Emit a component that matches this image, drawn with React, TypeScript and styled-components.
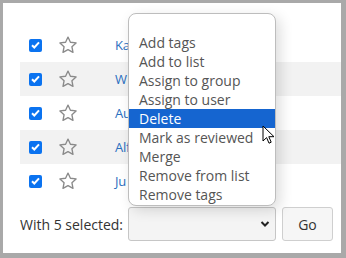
import React, { FC } from 'react';
import styled, { createGlobalStyle } from 'styled-components';

const GlobalStyle = createGlobalStyle`
  html, body {
    margin: 0;
    padding: 0;
    background: #a9a9a9;
  }
  body {
    width: 346px;
    height: 258px;
    overflow: hidden;
    font-family: 'Open Sans', 'Noto Sans', sans-serif;
  }
`;

const Panel = styled.div`
  position: relative;
  margin: 3px 5px 5px 3px;
  width: 338px;
  height: 250px;
  background: #fff;
  box-sizing: border-box;
  padding: 25px 0 0 17px;
`;

const Row = styled.div<{ $striped?: boolean }>`
  display: flex;
  align-items: center;
  height: 34px;
  background: ${(p) => (p.$striped ? '#f2f2f2' : 'transparent')};
`;

const Check = styled.span`
  width: 13px;
  height: 13px;
  margin-left: 9px;
  border-radius: 2px;
  background: #0b73f0;
  display: flex;
  align-items: center;
  justify-content: center;
`;

const StarCell = styled.span`
  margin-left: 16px;
  width: 20px;
  height: 20px;
  display: flex;
`;

const Name = styled.a`
  margin-left: 37px;
  color: #2a6fc0;
  font-size: 13px;
  letter-spacing: -0.3px;
  text-decoration: none;
`;

const Footer = styled.div`
  display: flex;
  align-items: center;
  margin-top: 9px;
  height: 34px;
`;

const Label = styled.span`
  font-size: 14px;
  color: #333;
  width: 108px;
`;

const Select = styled.div`
  width: 148px;
  height: 34px;
  box-sizing: border-box;
  border: 1px solid #c6c6c6;
  border-radius: 3px;
  background: #f4f4f4;
  display: flex;
  align-items: center;
  justify-content: flex-end;
  padding-right: 5px;
`;

const GoButton = styled.button`
  margin-left: 6px;
  width: 51px;
  height: 34px;
  border: 1px solid #cfcfcf;
  border-radius: 3px;
  background: #f6f6f6;
  font-family: inherit;
  font-size: 14px;
  color: #333;
`;

const Menu = styled.ul`
  position: absolute;
  left: 125px;
  top: 10px;
  width: 148px;
  margin: 0;
  padding: 0 0 1px;
  list-style: none;
  background: #fff;
  border: 1px solid #bdbdbd;
  border-radius: 8px;
  box-sizing: border-box;
  box-shadow: 4px 4px 14px rgba(0, 0, 0, 0.14);
`;

const Option = styled.li<{ $active?: boolean }>`
  height: 19px;
  line-height: 19px;
  padding-left: 10px;
  font-size: 14px;
  color: ${(p) => (p.$active ? '#fff' : '#555')};
  background: ${(p) => (p.$active ? '#1565d0' : 'transparent')};
`;

const Cursor = styled.svg`
  position: absolute;
  left: 259px;
  top: 122px;
`;

const Star: FC = () => (
  <svg width="20" height="20" viewBox="0 0 24 24">
    <path
      d="M12 2.5l2.9 6.2 6.8.8-5 4.6 1.3 6.7L12 17.5l-6 3.3 1.3-6.7-5-4.6 6.8-.8z"
      fill="none"
      stroke="#8a8a8a"
      strokeWidth="1.6"
      strokeLinejoin="round"
    />
  </svg>
);

const rows = ['Ka', 'W', 'Au', 'Alf', 'Ju'];
const options = [
  '',
  'Add tags',
  'Add to list',
  'Assign to group',
  'Assign to user',
  'Delete',
  'Mark as reviewed',
  'Merge',
  'Remove from list',
  'Remove tags',
];

const App: FC = () => (
  <>
    <GlobalStyle />
    <Panel>
      {rows.map((name, i) => (
        <Row key={i} $striped={i % 2 === 1}>
          <Check>
            <svg width="9" height="8" viewBox="0 0 9 8">
              <path d="M1 4.2l2.3 2.3L8 1.3" fill="none" stroke="#fff" strokeWidth="2" />
            </svg>
          </Check>
          <StarCell>
            <Star />
          </StarCell>
          <Name href="#">{name}</Name>
        </Row>
      ))}
      <Footer>
        <Label>With 5 selected:</Label>
        <Select>
          <svg width="10" height="8" viewBox="0 0 10 8">
            <path d="M1.5 2l3.5 3.5L8.5 2" fill="none" stroke="#222" strokeWidth="2" />
          </svg>
        </Select>
        <GoButton>Go</GoButton>
      </Footer>
      <Menu>
        {options.map((o, i) => (
          <Option key={i} $active={o === 'Delete'}>
            {o}
          </Option>
        ))}
      </Menu>
      <Cursor width="13" height="20" viewBox="0 0 13 20">
        <path
          d="M1 1v15l3.6-3.4 2.4 5.6 2.2-1-2.4-5.5H12z"
          fill="#fff"
          stroke="#000"
          strokeWidth="1"
          strokeLinejoin="round"
        />
      </Cursor>
    </Panel>
  </>
);

export default App;
